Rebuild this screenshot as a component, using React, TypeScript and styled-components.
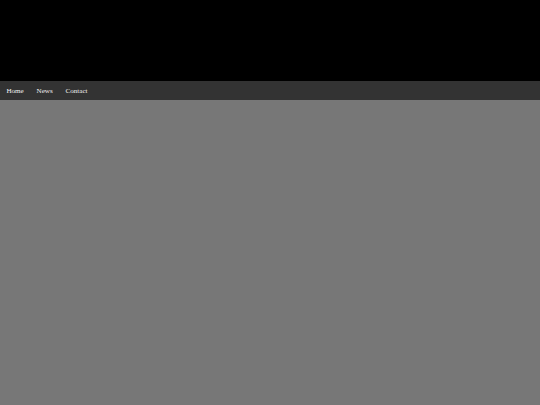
import styled, { createGlobalStyle } from 'styled-components';

const GlobalStyle = createGlobalStyle`
  html, body {
    margin: 0;
    padding: 0;
    background: #777777;
  }
  body {
    font-family: 'Liberation Serif', 'Times New Roman', serif;
  }
`;

const links = ['Home', 'News', 'Contact'];

const App = () => {
  return (
    <>
      <GlobalStyle />
      <Page>
        <Header />
        <Topnav>
          {links.map((label) => (
            <NavLink key={label} href='#'>
              {label}
            </NavLink>
          ))}
        </Topnav>
        <Content />
      </Page>
    </>
  );
};

const Page = styled.div`
  display: flex;
  flex-direction: column;
  min-height: 405px;
  background: #777777;
`;

const Header = styled.header`
  height: 81px;
  background: #000000;
`;

const Topnav = styled.nav`
  display: flex;
  height: 19px;
  background: #333333;
`;

const NavLink = styled.a`
  display: flex;
  align-items: center;
  padding: 0 6.4px;
  color: #f2f2f2;
  font-size: 7.1px;
  text-decoration: none;
`;

const Content = styled.main`
  flex: 1;
  background: #777777;
`;

export default App;
